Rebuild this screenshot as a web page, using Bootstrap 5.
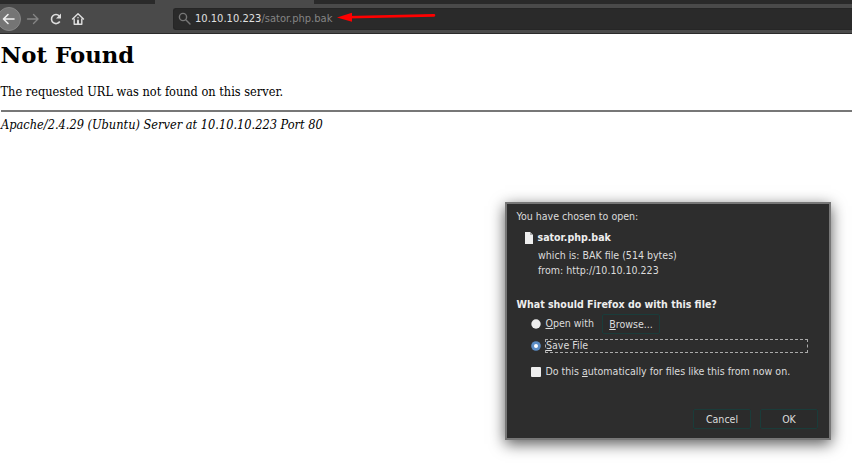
<!DOCTYPE html>
<html lang="en">
<head>
<meta charset="utf-8">
<meta name="viewport" content="width=device-width, initial-scale=1">
<title>404 Not Found</title>
<link href="https://cdn.jsdelivr.net/npm/bootstrap@5.3.0/dist/css/bootstrap.min.css" rel="stylesheet">
<style>
body{width:852px;height:463px;background:#fff;color:#000}
.chrome{height:34px;background:#4a4a4a;border-bottom:1px solid #2a2a2a}
.tabs{height:4px}
.tabs span{background:#2a2a2a}
.tab-a{width:155px}.tab-b{width:159px;background:#4a4a4a!important}
.tools{height:29px}
.back{width:24px;height:24px;margin-left:-3px;border-radius:50%;background:#757575;border:1px solid #858585}
.fwd{margin-left:5px}.reload{margin-left:9px}.home{margin-left:8px}
.url{height:22px;margin-left:88px;padding-left:4px;background:#2a2a2a;border:1px solid #262626;border-right:0;border-radius:3px 0 0 3px;font:11.05px "DejaVu Sans",sans-serif;font-stretch:condensed;color:#858585}
.url b{font-weight:400;color:#e0e0e0}
.url p{line-height:20px;width:142px;margin-left:4px;white-space:nowrap}
.arrow{margin-top:-5px}
.site{font-family:"DejaVu Serif",serif;font-stretch:condensed;padding-left:1px}
.site h1{font-size:22.800px;font-stretch:normal;line-height:30px;font-weight:700;margin:6px 0 0 -.5px}
.site p{font-size:12.650px;line-height:16px;margin:14px 0 0 -.5px}
.site hr{margin:10px 0 0;border:0;height:1.500px;background:#777;opacity:1}
.site address{font-size:12.680px;line-height:16px;font-style:italic;margin:5px 0 0}
.dialog-box{left:505px;top:202px;width:326px;height:238px;background:#2d2d2d;border:2px solid #777;border-radius:0;box-shadow:0 4px 14px rgba(0,0,0,.65);color:#dcdcdc;font:10.560px/15px "DejaVu Sans",sans-serif;font-stretch:condensed;padding:5px 11px 0 9.500px;white-space:nowrap}
.dialog-box b{color:#eee}
.name{margin-top:6px;padding-left:7px}
.meta{margin-left:21.500px;line-height:15px}
.name + .meta{margin-top:3px}
.ask{margin-top:19px}
.opt{padding-left:14.500px}
.opt svg{margin-right:4.500px}
.open-row{margin-top:2px}
.open-row span{margin-top:-2px}
.save-row{margin-top:5px}
.auto-row{margin-top:11px}
.actions{margin-top:30px;gap:9px}
.plain{background:#2b2b2b;border:1px solid #1a3c3a;border-radius:2px;color:#dcdcdc;font:inherit;padding:0;height:20px;width:58px}
.focused{border:1px dashed #aaa;width:263px;height:14px;line-height:11px;margin-left:-.5px}
</style>
</head>
<body class="position-relative overflow-hidden">
<header class="chrome">
  <div class="tabs d-flex"><span class="tab-a"></span><span class="tab-b"></span><span class="flex-grow-1"></span></div>
  <nav class="tools d-flex align-items-center">
    <div class="back d-flex align-items-center justify-content-center flex-shrink-0"><svg width="14" height="12" fill="none" stroke="#eee" stroke-width="1.6" stroke-linecap="round" stroke-linejoin="round"><path d="M12 6H2M6 1.5 1.5 6 6 10.500"/></svg></div>
    <svg class="fwd flex-shrink-0" width="14" height="12" fill="none" stroke="#858585" stroke-width="1.4" stroke-linecap="round" stroke-linejoin="round"><path d="M1.500 6h10M7.500 1.500 12 6 7.500 10.500"/></svg>
    <svg class="reload flex-shrink-0" width="14" height="14" fill="none" stroke="#ddd" stroke-width="1.6"><path d="M10.800 9.500A4.500 4.500 0 1 1 10.300 4"/><path d="M12 1.500v5H7z" fill="#ddd" stroke="none"/></svg>
    <svg class="home flex-shrink-0" width="14" height="14" fill="none" stroke="#ddd" stroke-width="1.4" stroke-linecap="round" stroke-linejoin="round"><path d="M1.500 7 7 1.800 12.500 7M3.200 7v5.300h7.600V7"/><path d="M7 12V8.500" stroke-width="2"/><path d="M7 5.500v.2"/></svg>
    <div class="url d-flex flex-grow-1 align-items-center">
      <svg width="13" height="13" fill="none" stroke="#777" stroke-width="1.400" stroke-linecap="round"><circle cx="5" cy="5" r="3.600"/><path d="m8 8 4 4"/></svg>
      <p class="mb-0"><b>10.10.10.223</b>/sator.php.bak</p>
      <svg class="arrow" width="100" height="12"><path d="M10 7.200 97 5.400" stroke="#f00" stroke-width="2.600" stroke-linecap="round"/><path d="M0 7.400 15 2.800v9z" fill="#f00"/></svg>
    </div>
  </nav>
</header>
<main class="site">
  <h1>Not Found</h1>
  <p>The requested URL was not found on this server.</p>
  <hr>
  <address>Apache/2.4.29 (Ubuntu) Server at 10.10.10.223 Port 80</address>
</main>
<section class="dialog-box position-absolute" role="dialog">
  <div>You have chosen to open:</div>
  <div class="name d-flex align-items-center"><svg width="10" height="12" class="me-1"><path d="M1 0h5l3 3v9H1z" fill="#eee"/><path d="M6 0v3h3" fill="#aaa"/></svg><b>sator.php.bak</b></div>
  <div class="meta">which is: BAK file (514 bytes)</div>
  <div class="meta">from: http://10.10.10.223</div>
  <div class="ask"><b>What should Firefox do with this file?</b></div>
  <div class="opt open-row d-flex align-items-center"><svg width="10" height="10"><circle cx="5" cy="5" r="4.700" fill="#eee"/></svg><span><u>O</u>pen with</span><button class="plain ms-2"><u>B</u>rowse...</button></div>
  <div class="opt save-row d-flex align-items-center"><svg width="10" height="10"><circle cx="5" cy="5" r="4.800" fill="#5b8cc4"/><circle cx="5" cy="5" r="2" fill="#fff"/></svg><span class="focused"><u>S</u>ave File</span></div>
  <div class="opt auto-row d-flex align-items-center"><svg width="10" height="10"><rect width="10" height="10" rx="1" fill="#eee"/></svg><span>Do this <u>a</u>utomatically for files like this from now on.</span></div>
  <div class="actions d-flex justify-content-end"><button class="plain">Cancel</button><button class="plain">OK</button></div>
</section>
<script src="https://cdn.jsdelivr.net/npm/bootstrap@5.3.0/dist/js/bootstrap.bundle.min.js"></script>
</body>
</html>
